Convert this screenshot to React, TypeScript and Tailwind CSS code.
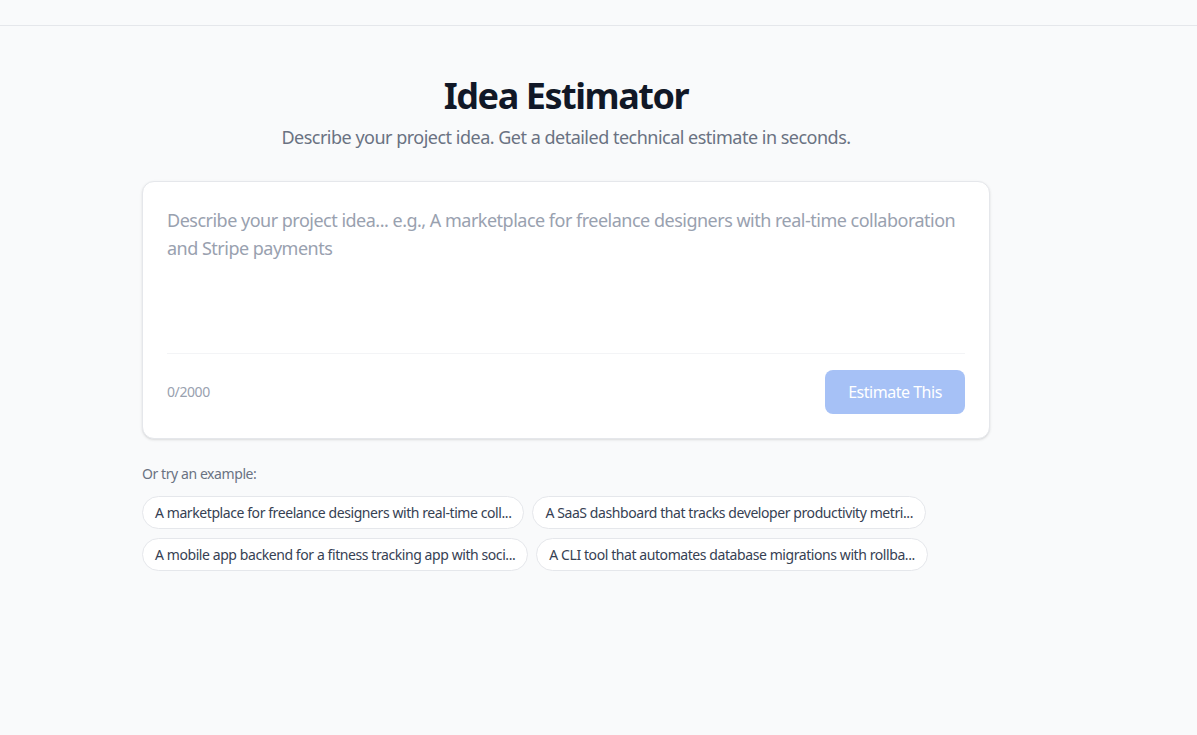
import React from "react";

const examples = [
  "A marketplace for freelance designers with real-time coll...",
  "A SaaS dashboard that tracks developer productivity metri...",
  "A mobile app backend for a fitness tracking app with soci...",
  "A CLI tool that automates database migrations with rollba...",
];

export default function App() {
  return (
    <div
      className="min-h-screen bg-[#f9fafb] text-gray-900"
      style={{ fontFamily: '"Noto Sans", "Open Sans", sans-serif' }}
    >
      <div className="h-[26px] border-b border-gray-200 bg-[#f9fafb]" />
      <main className="ml-[142px] w-[848px] pt-[50px]">
        <div className="flex flex-col items-center">
          <h1 className="text-4xl font-bold leading-10 tracking-[-0.04em] text-[#111827]">Idea Estimator</h1>
          <p className="mt-[7px] text-lg leading-7 tracking-[-0.028em] text-gray-500">
            Describe your project idea. Get a detailed technical estimate in seconds.
          </p>
        </div>

        <div className="mt-[30px] rounded-xl border border-gray-200 bg-white p-6 shadow-sm">
          <textarea
            className="block h-[147px] w-full resize-none bg-transparent text-lg leading-7 tracking-[-0.028em] text-gray-900 outline-none placeholder:text-gray-400"
            placeholder="Describe your project idea... e.g., A marketplace for freelance designers with real-time collaboration and Stripe payments"
          />
          <div className="flex items-center justify-between border-t border-gray-100 pt-4">
            <span className="text-sm tracking-[-0.03em] text-gray-400">0/2000</span>
            <button
              disabled
              className="h-11 w-[140px] rounded-lg bg-[#a6c1f6] text-base tracking-[-0.03em] text-white"
            >
              Estimate This
            </button>
          </div>
        </div>

        <div className="mt-[25px]">
          <p className="text-sm tracking-[-0.03em] text-gray-500">Or try an example:</p>
          <div className="mt-[12px] flex flex-wrap gap-x-2 gap-y-[9px]">
            {examples.map((e) => (
              <button
                key={e}
                className="h-[33px] rounded-full border border-gray-200 bg-white px-3 text-sm tracking-[-0.03em] text-gray-700"
              >
                {e}
              </button>
            ))}
          </div>
        </div>
      </main>
    </div>
  );
}
